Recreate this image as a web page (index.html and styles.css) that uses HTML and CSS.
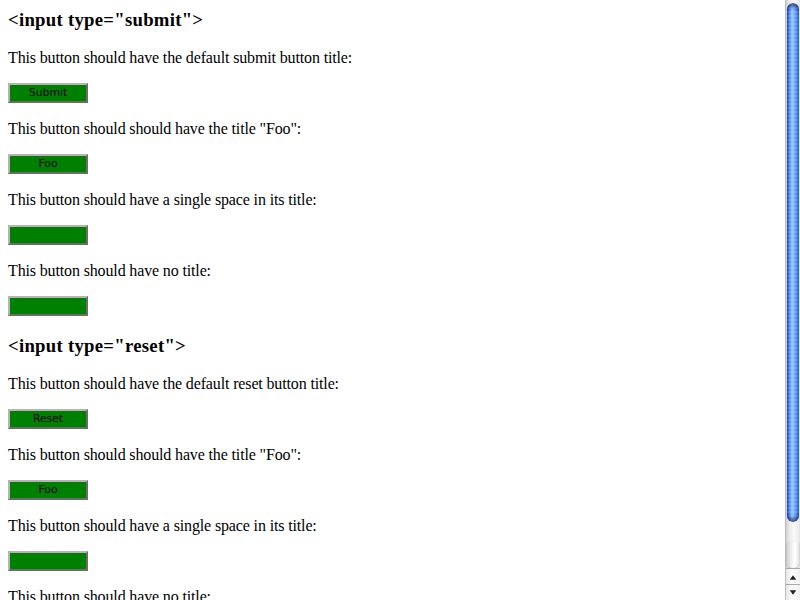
FILE: index.html
```html
<!DOCTYPE html>
<html>
<head>
<meta charset="utf-8">
<link rel="stylesheet" href="styles.css">
</head>
<body>
<div class="window">
  <div class="page">
    <h3 class="heading first">&lt;input type="submit"&gt;</h3>
    <p>This button should have the default submit button title:</p>
    <div class="row"><button class="btn">Submit</button></div>
    <p>This button should should have the title "Foo":</p>
    <div class="row"><button class="btn">Foo</button></div>
    <p>This button should have a single space in its title:</p>
    <div class="row"><button class="btn"> </button></div>
    <p>This button should have no title:</p>
    <div class="row"><button class="btn"></button></div>
    <h3 class="heading">&lt;input type="reset"&gt;</h3>
    <p>This button should have the default reset button title:</p>
    <div class="row"><button class="btn">Reset</button></div>
    <p>This button should should have the title "Foo":</p>
    <div class="row"><button class="btn">Foo</button></div>
    <p>This button should have a single space in its title:</p>
    <div class="row"><button class="btn"> </button></div>
    <p>This button should have no title:</p>
    <div class="row"><button class="btn"></button></div>
  </div>
  <div class="scrollbar">
    <div class="track">
      <div class="thumb"></div>
      <div class="track-end"></div>
    </div>
    <div class="arrow up"><svg width="15" height="16" viewBox="0 0 15 16"><path d="M4 11 L7.5 6 L11 11 Z" fill="#222"/></svg></div>
    <div class="arrow down"><svg width="15" height="16" viewBox="0 0 15 16"><path d="M4 5 L7.5 10 L11 5 Z" fill="#222"/></svg></div>
  </div>
</div>
</body>
</html>
```

FILE: styles.css
```css
html, body {
  margin: 0;
  padding: 0;
  height: 600px;
  overflow: hidden;
  background: #fff;
}
.window {
  display: flex;
  width: 800px;
  height: 600px;
}
.page {
  flex: 1;
  padding: 8px;
  font-family: "Liberation Serif", "Times New Roman", serif;
  font-size: 16px;
  color: #000;
  overflow: hidden;
}
.heading {
  font-size: 18.72px;
  font-weight: bold;
  line-height: 22px;
  letter-spacing: 0.28px;
  padding-top: 1px;
  margin: 18px 0 17px 0;
}
.heading.first {
  margin-top: 0;
}
p {
  margin: 16px 0;
  padding-top: 1px;
  line-height: 18px;
  letter-spacing: -0.14px;
}
.row {
  height: 20px;
  display: flex;
}
.btn {
  width: 80px;
  height: 20px;
  box-sizing: border-box;
  margin: 0;
  padding: 0;
  background: #008000;
  border-style: solid;
  border-width: 2px;
  border-color: #b4b4b4 #6c6c6c #6c6c6c #b4b4b4;
  font-family: "DejaVu Sans", "Liberation Sans", sans-serif;
  font-size: 10.8px;
  line-height: 16px;
  color: #000;
  text-align: center;
}
.scrollbar {
  width: 15px;
  height: 600px;
  display: flex;
  flex-direction: column;
  background: linear-gradient(to right, #cfcfcf 0, #e9e9e9 3px, #fafafa 8px, #ececec 13px, #d4d4d4 15px);
  border-left: 1px solid #bdbdbd;
  box-sizing: border-box;
}
.track {
  flex: 1;
  display: flex;
  flex-direction: column;
  padding: 3px 1px 0 1px;
}
.thumb {
  height: 519px;
  border-radius: 6px;
  background:
    repeating-linear-gradient(to bottom, rgba(255,255,255,0.12) 0, rgba(255,255,255,0.12) 2px, rgba(0,0,0,0) 2px, rgba(0,0,0,0) 4px),
    linear-gradient(to right, #123cbf 0, #3f80ec 2px, #9cc7fb 5px, #6aa6f6 8px, #2f6fe4 11px, #123cb8 13px);
  box-shadow: inset 0 6px 4px -3px rgba(0,0,60,0.6), inset 0 -6px 4px -3px rgba(0,0,60,0.6);
}
.track-end {
  flex: 1;
  margin-top: 20px;
  border-radius: 0 0 7px 7px;
  background: linear-gradient(to right, #d4d4d4 0, #f3f3f3 5px, #ffffff 8px, #e6e6e6 12px, #cccccc 13px);
  box-shadow: 0 1px 2px rgba(0,0,0,0.25);
}
.arrow {
  height: 16px;
  display: flex;
  border-top: 1px solid #a8a8a8;
  box-sizing: border-box;
  background: linear-gradient(to right, #e6e6e6 0, #fcfcfc 6px, #f0f0f0 14px);
}
```
